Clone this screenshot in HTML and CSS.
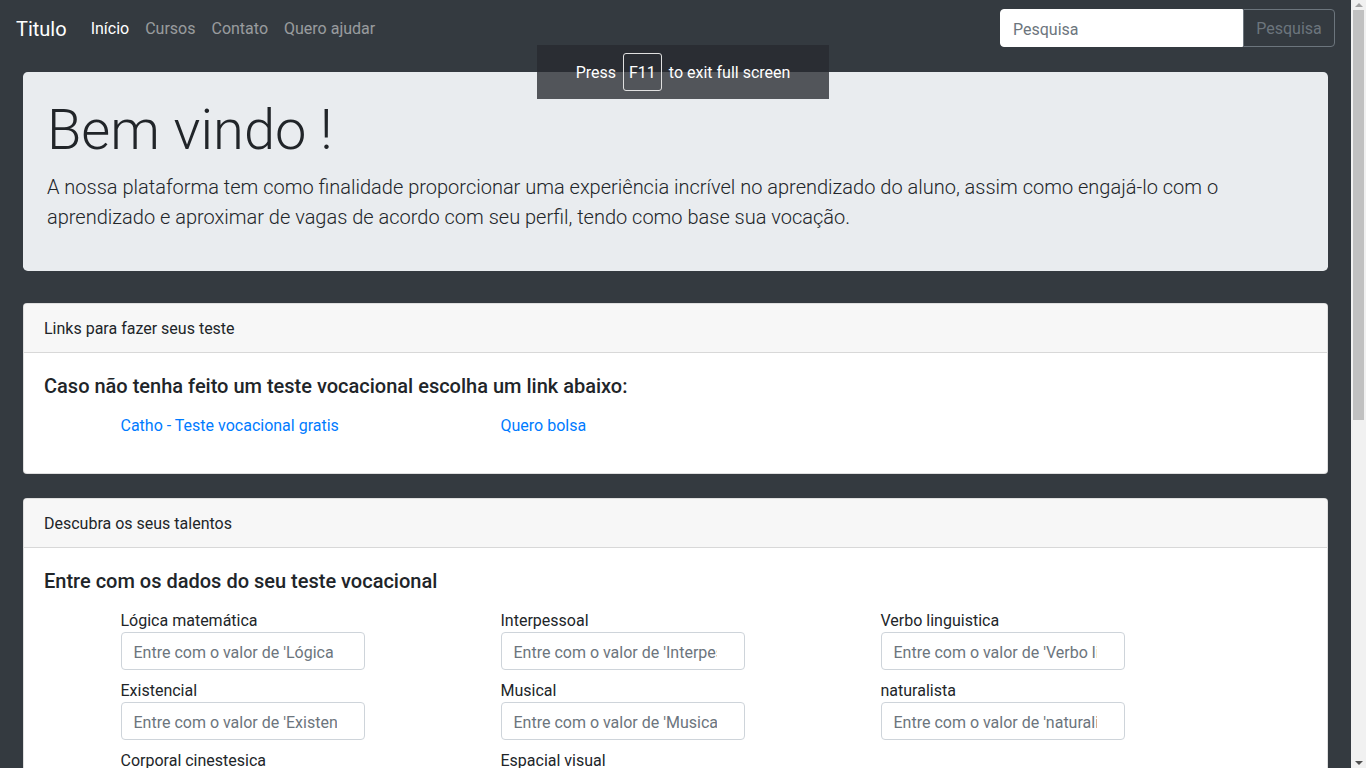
FILE: index.html
```html
<!DOCTYPE html>
<html lang="pt-BR">
<head>
<meta charset="utf-8">
<title>Titulo</title>
<link rel="stylesheet" href="styles.css">
</head>
<body>
<div class="screen">
  <div class="page">
    <nav class="navbar">
      <a class="brand" href="#">Titulo</a>
      <ul class="nav">
        <li><a class="nav-link active" href="#">Início</a></li>
        <li><a class="nav-link" href="#">Cursos</a></li>
        <li><a class="nav-link" href="#">Contato</a></li>
        <li><a class="nav-link" href="#">Quero ajudar</a></li>
      </ul>
      <form class="search">
        <input class="search-input" type="text" placeholder="Pesquisa">
        <button class="search-btn" type="button">Pesquisa</button>
      </form>
    </nav>
    <main class="content">
      <section class="jumbotron">
        <h1 class="display">Bem vindo !</h1>
        <p class="lead">A nossa plataforma tem como finalidade proporcionar uma experiência incrível no aprendizado do aluno, assim como engajá-lo com o aprendizado e aproximar de vagas de acordo com seu perfil, tendo como base sua vocação.</p>
      </section>

      <section class="card">
        <div class="card-header">Links para fazer seus teste</div>
        <div class="card-body">
          <h5 class="card-title">Caso não tenha feito um teste vocacional escolha um link abaixo:</h5>
          <div class="cols">
            <p class="link-cell"><a href="#">Catho - Teste vocacional gratis</a></p>
            <p class="link-cell"><a href="#">Quero bolsa</a></p>
          </div>
        </div>
      </section>

      <section class="card card-gap">
        <div class="card-header">Descubra os seus talentos</div>
        <div class="card-body">
          <h5 class="card-title">Entre com os dados do seu teste vocacional</h5>
          <div class="cols">
            <div class="field"><label>Lógica matemática</label><input class="form-control" type="number" placeholder="Entre com o valor de 'Lógica matemática'"></div>
            <div class="field"><label>Interpessoal</label><input class="form-control" type="number" placeholder="Entre com o valor de 'Interpessoal'"></div>
            <div class="field"><label>Verbo linguistica</label><input class="form-control" type="number" placeholder="Entre com o valor de 'Verbo linguistica'"></div>
            <div class="field"><label>Existencial</label><input class="form-control" type="number" placeholder="Entre com o valor de 'Existencial'"></div>
            <div class="field"><label>Musical</label><input class="form-control" type="number" placeholder="Entre com o valor de 'Musical'"></div>
            <div class="field"><label>naturalista</label><input class="form-control" type="number" placeholder="Entre com o valor de 'naturalista'"></div>
            <div class="field"><label>Corporal cinestesica</label><input class="form-control" type="number" placeholder="Entre com o valor de 'Corporal cinestesica'"></div>
            <div class="field"><label>Espacial visual</label><input class="form-control" type="number" placeholder="Entre com o valor de 'Espacial visual'"></div>
          </div>
        </div>
      </section>
    </main>
  </div>

  <div class="scrollbar">
    <div class="sb-btn"><span class="arrow-up"></span></div>
    <div class="sb-track"><div class="sb-thumb"></div></div>
    <div class="sb-btn"><span class="arrow-down"></span></div>
  </div>

  <div class="fs-bubble"><span class="fs-text">Press</span><span class="key">F11</span><span class="fs-text">to exit full screen</span></div>
</div>
</body>
</html>
```

FILE: styles.css
```css
* { box-sizing: border-box; }

html, body {
  margin: 0;
  padding: 0;
  height: 100%;
}

body {
  font-family: Roboto, "Liberation Sans", Arial, sans-serif;
  font-size: 16px;
  line-height: 1.5;
  color: #212529;
  background: #343a40;
}

.screen {
  position: relative;
  display: flex;
  height: 100vh;
  overflow: hidden;
}

.page {
  flex: 1;
  min-width: 0;
  overflow: hidden;
  background: #343a40;
}

/* Navbar */
.navbar {
  display: flex;
  align-items: center;
  height: 56px;
  padding: 8px 16px;
  background: #343a40;
}

.brand {
  color: #fff;
  font-size: 20px;
  line-height: 30px;
  padding: 6px 0 4px;
  margin-right: 16px;
  text-decoration: none;
}

.nav {
  display: flex;
  list-style: none;
  margin: 0;
  padding: 0;
}

.nav-link {
  display: block;
  padding: 9px 8px 7px;
  color: rgba(255, 255, 255, 0.5);
  text-decoration: none;
  line-height: 24px;
}

.nav-link.active { color: #fff; }

.search {
  margin-left: auto;
  display: flex;
}

.search-input {
  width: 243px;
  height: 38px;
  padding: 7px 12px 5px;
  font: inherit;
  color: #495057;
  background: #fff;
  border: 1px solid #fff;
  border-radius: 4px 0 0 4px;
  outline: none;
}

.search-input::placeholder { color: #6c757d; opacity: 1; }

.search-btn {
  width: 92px;
  height: 38px;
  padding: 7px 0 5px;
  font: inherit;
  color: #6c757d;
  background: transparent;
  border: 1px solid #6c757d;
  border-radius: 0 4px 4px 0;
}

/* Content */
.content {
  padding: 16px 23px 0;
}

.jumbotron {
  background: #e9ecef;
  border-radius: 4.8px;
  padding: 25px 24px 23px;
  margin-bottom: 32px;
}

.display {
  margin: 0 0 8px;
  font-size: 56px;
  font-weight: 300;
  line-height: 1.2;
}

.lead {
  margin: 0 0 16px;
  font-size: 20px;
  font-weight: 300;
  line-height: 30px;
}

.card {
  background: #fff;
  border: 1px solid rgba(0, 0, 0, 0.125);
  border-radius: 4px;
}

.card-gap { margin-top: 24px; }

.card-header {
  padding: 13px 20px 11px;
  background: #f7f7f7;
  border-bottom: 1px solid rgba(0, 0, 0, 0.125);
  border-radius: 3px 3px 0 0;
  line-height: 24px;
}

.card-body {
  padding: 20px;
}

.card-title {
  margin: 0 0 15px;
  padding-top: 1px;
  font-size: 20px;
  font-weight: 500;
  line-height: 24px;
}

.cols {
  width: 1110px;
  margin: 0 auto;
  display: grid;
  grid-template-columns: repeat(3, 1fr);
  column-gap: 30px;
}

.link-cell {
  margin: 0 0 15px;
  padding-top: 1px;
}

.link-cell a {
  color: #007bff;
  text-decoration: none;
}

.field {
  margin-bottom: 8px;
}

.field label {
  display: block;
  padding-top: 1px;
  line-height: 23px;
}

.form-control {
  display: block;
  width: 244px;
  height: 38px;
  padding: 7px 12px 5px;
  font: inherit;
  color: #495057;
  background: #fff;
  border: 1px solid #ced4da;
  border-radius: 4px;
  outline: none;
}

.form-control::placeholder { color: #6c757d; opacity: 1; }

/* Scrollbar imitation */
.scrollbar {
  width: 15px;
  flex: none;
  display: flex;
  flex-direction: column;
  background: #f1f1f1;
}

.sb-btn {
  height: 10px;
  display: flex;
  align-items: center;
  justify-content: center;
}

.arrow-up {
  width: 0;
  height: 0;
  border-left: 4px solid transparent;
  border-right: 4px solid transparent;
  border-bottom: 4px solid #a3a3a3;
}

.arrow-down {
  width: 0;
  height: 0;
  border-left: 4px solid transparent;
  border-right: 4px solid transparent;
  border-top: 4px solid #505050;
}

.sb-track {
  flex: 1;
  padding: 0 2px;
}

.sb-thumb {
  height: 410px;
  background: #c1c1c1;
}

/* Fullscreen notice overlay */
.fs-bubble {
  position: absolute;
  top: 45px;
  left: 50%;
  transform: translateX(-50%);
  width: 292px;
  height: 54px;
  padding: 8px 0;
  display: flex;
  align-items: center;
  justify-content: center;
  gap: 7px;
  white-space: nowrap;
  background: rgba(40, 42, 47, 0.78);
  color: #fff;
  font-size: 16px;
  line-height: 24px;
}

.fs-text {
  padding-top: 2px;
}

.key {
  display: inline-block;
  height: 38px;
  line-height: 36px;
  padding: 1px 5px 0;
  border: 1px solid #e0e0e0;
  border-radius: 3px;
}
```
